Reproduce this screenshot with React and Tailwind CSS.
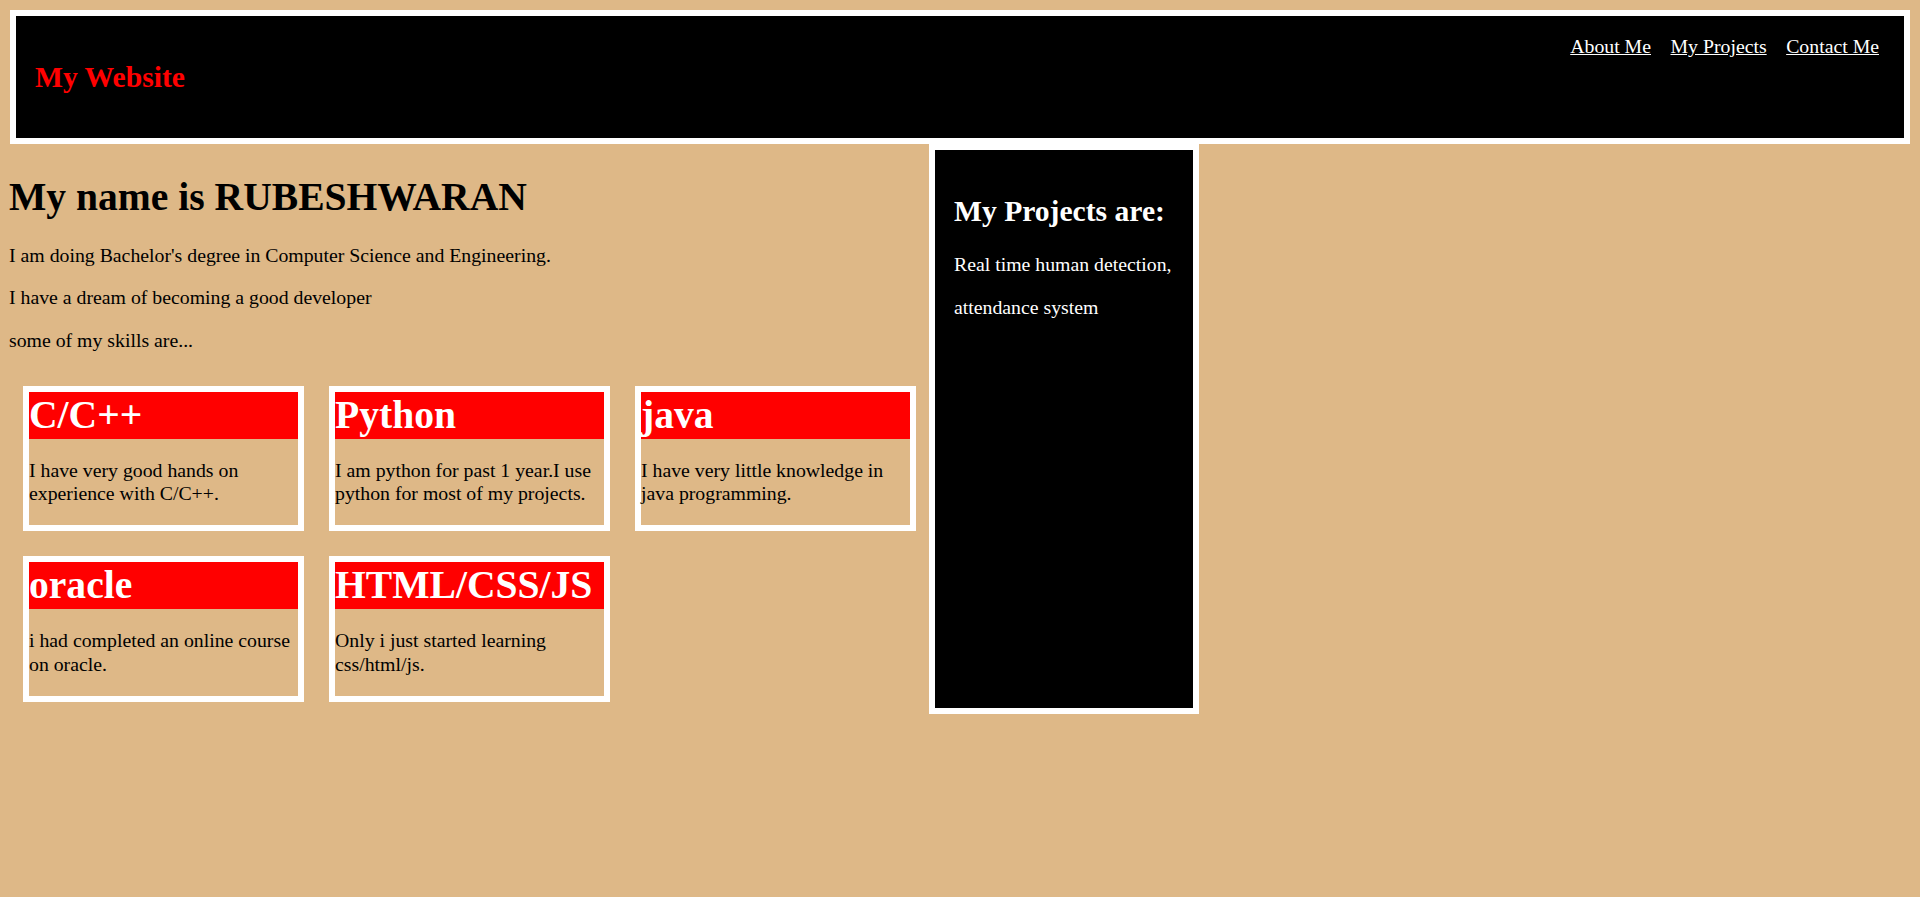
const skills = [
  { title: "C/C++", text: "I have very good hands on experience with C/C++." },
  { title: "Python", text: "I am python for past 1 year.I use python for most of my projects." },
  { title: "java", text: "I have very little knowledge in java programming." },
  { title: "oracle", text: "i had completed an online course on oracle." },
  { title: "HTML/CSS/JS", text: "Only i just started learning css/html/js." },
];

const App = () => {
  return (
    <div className="min-h-screen bg-[#deb887] pt-[10px] font-['Liberation_Serif','Times_New_Roman',serif] text-black">
      {/* HEADER */}
      <header className="ml-[10px] w-[1900px] h-[134px] border-[6px] border-white bg-black flex items-center justify-between pl-[19px] pr-[25px]">
        <h1 className="text-[29.6px] leading-[34px] font-bold text-[#ff0000]">My Website</h1>
        <nav className="self-start mt-[19px] flex gap-[19.5px] text-[19.8px] leading-[23px]">
          <a href="#" className="text-white underline">About Me</a>
          <a href="#" className="text-white underline">My Projects</a>
          <a href="#" className="text-white underline">Contact Me</a>
        </nav>
      </header>

      <div className="flex items-start">
        {/* MAIN */}
        <main className="w-[929px] pl-[9px]">
          <h1 className="mt-[30px] mb-[23.5px] text-[39.6px] leading-[46px] font-bold">My name is RUBESHWARAN</h1>
          <p className="my-[19.8px] text-[19.8px] leading-[23px]">I am doing Bachelor's degree in Computer Science and Engineering.</p>
          <p className="my-[19.8px] text-[19.8px] leading-[23px]">I have a dream of becoming a good developer</p>
          <p className="my-[19.8px] text-[19.8px] leading-[23px]">some of my skills are...</p>

          <div className="flex flex-wrap gap-[25px] pl-[14px] pt-[14px]">
            {skills.map((s) => (
              <div key={s.title} className="w-[281px] border-[6px] border-white">
                <h2 className="bg-[#ff0000] text-white font-bold text-[39.6px] leading-[47px] whitespace-nowrap overflow-hidden">{s.title}</h2>
                <p className="my-[20px] text-[19.8px] leading-[23.3px]">{s.text}</p>
              </div>
            ))}
          </div>
        </main>

        {/* SIDEBAR */}
        <aside className="w-[270px] h-[570px] border-[6px] border-white bg-black text-white pl-[19px] pt-[44px]">
          <h2 className="text-[29.6px] leading-[34px] font-bold mb-[25px]">My Projects are:</h2>
          <p className="text-[19.8px] leading-[23px] mb-[20px]">Real time human detection,</p>
          <p className="text-[19.8px] leading-[23px]">attendance system</p>
        </aside>
      </div>
    </div>
  );
};

export default App;
